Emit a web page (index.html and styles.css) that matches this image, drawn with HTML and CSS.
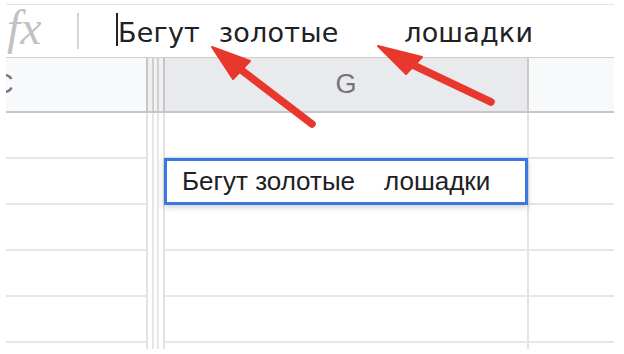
FILE: index.html
```html
<!DOCTYPE html>
<html lang="ru">
<head>
    <meta charset="UTF-8">
    <meta name="viewport" content="width=device-width, initial-scale=1.0">
    <title>Бегут золотые лошадки</title>
    <link rel="stylesheet" href="styles.css">
</head>
<body>
    <div class="sheet">
        <!-- Formula bar -->
        <div class="formula-bar">
            <span class="fx">fx</span>
            <span class="fx-sep"></span>
            <span class="caret"></span>
            <span class="formula-text">Бегут  золотые       лошадки</span>
        </div>

        <!-- Column headers -->
        <div class="row row-head">
            <div class="cell col-c"><span class="col-label col-label-cut">C</span></div>
            <div class="freeze"></div>
            <div class="cell col-g col-selected"><span class="col-label">G</span></div>
            <div class="cell col-h"></div>
        </div>

        <!-- Grid rows -->
        <div class="row">
            <div class="cell col-c"></div>
            <div class="freeze"></div>
            <div class="cell col-g"></div>
            <div class="cell col-h"></div>
        </div>
        <div class="row">
            <div class="cell col-c"></div>
            <div class="freeze"></div>
            <div class="cell col-g">
                <div class="cell-editor">Бегут золотые    лошадки</div>
            </div>
            <div class="cell col-h"></div>
        </div>
        <div class="row">
            <div class="cell col-c"></div>
            <div class="freeze"></div>
            <div class="cell col-g"></div>
            <div class="cell col-h"></div>
        </div>
        <div class="row">
            <div class="cell col-c"></div>
            <div class="freeze"></div>
            <div class="cell col-g"></div>
            <div class="cell col-h"></div>
        </div>
        <div class="row">
            <div class="cell col-c"></div>
            <div class="freeze"></div>
            <div class="cell col-g"></div>
            <div class="cell col-h"></div>
        </div>
        <div class="row row-stub">
            <div class="cell col-c"></div>
            <div class="freeze"></div>
            <div class="cell col-g"></div>
            <div class="cell col-h"></div>
        </div>
    </div>

    <!-- Annotation arrows -->
    <svg class="arrows" width="624" height="354" viewBox="0 0 624 354">
        <g fill="#e8382e" stroke="#e8382e" stroke-linecap="round" stroke-linejoin="round">
            <line x1="312" y1="124" x2="240" y2="69" stroke-width="7.5"/>
            <polygon points="212,47 233,79 250,61" stroke-width="2"/>
            <line x1="491" y1="102" x2="413" y2="65" stroke-width="7.5"/>
            <polygon points="378,46 406,74 422,57" stroke-width="2"/>
        </g>
    </svg>
</body>
</html>
```

FILE: styles.css
```css
* {
    box-sizing: border-box;
    margin: 0;
    padding: 0;
}

body {
    background-color: #fff;
    width: 624px;
    height: 354px;
    overflow: hidden;
    position: relative;
}

.sheet {
    margin-left: 6px;
    padding-top: 4px;
    width: 608px;
}

.formula-bar {
    display: flex;
    align-items: center;
    height: 53px;
    border-top: 1px solid #e4e4e4;
}

.fx {
    font-family: "Liberation Serif", serif;
    font-style: italic;
    font-size: 48px;
    line-height: 48px;
    color: #c2c2c2;
    width: 71px;
    padding-left: 1px;
    margin-top: -6px;
}

.fx-sep {
    width: 2px;
    height: 36px;
    background-color: #d4d4d4;
}

.caret {
    width: 2px;
    height: 33px;
    margin-left: 37px;
    margin-top: -3px;
    background-color: #222;
}

.formula-text {
    font-family: "DejaVu Sans", sans-serif;
    font-size: 27px;
    line-height: 30px;
    letter-spacing: 0.2px;
    word-spacing: 0.6px;
    color: #202124;
    white-space: pre;
    margin-top: 4px;
}

.row {
    display: flex;
    height: 46px;
}

.row-head {
    height: 56px;
    border-top: 1px solid #cdcdcd;
    border-bottom: 2px solid #c6c6c6;
}

.row-stub {
    height: 6px;
}

.cell {
    position: relative;
    height: 100%;
    border-bottom: 2px solid #e6e6e6;
}

.row-stub .cell,
.row-head .cell {
    border-bottom: none;
}

.col-c {
    width: 140px;
    overflow: hidden;
}

.col-g {
    width: 364px;
    border-right: 2px solid #e3e3e3;
}

.col-h {
    width: 85px;
}

.freeze {
    width: 19px;
    height: 100%;
    background: linear-gradient(to right,
        #e2e2e2 0, #e2e2e2 2px,
        #fff 2px, #fff 6px,
        #e6e6e6 6px, #e6e6e6 8px,
        #fff 8px, #fff 11px,
        #e6e6e6 11px, #e6e6e6 13px,
        #fff 13px, #fff 17px,
        #e2e2e2 17px, #e2e2e2 19px);
}

.row-head .freeze {
    background: linear-gradient(to right,
        #c6c6c6 0, #c6c6c6 2px,
        #eef0f1 2px, #eef0f1 6px,
        #cfcfcf 6px, #cfcfcf 8px,
        #eef0f1 8px, #eef0f1 11px,
        #cfcfcf 11px, #cfcfcf 13px,
        #eef0f1 13px, #eef0f1 17px,
        #c6c6c6 17px, #c6c6c6 19px);
}

.row-head .cell {
    display: flex;
    align-items: center;
    justify-content: center;
    background-color: #f8f9fa;
}

.row-head .col-c {
    justify-content: flex-start;
}

.row-head .col-g {
    border-right-color: #cacaca;
}

.row-head .col-selected {
    background-color: #e8eaed;
}

.col-label {
    font-family: "Liberation Sans", Arial, sans-serif;
    font-size: 27px;
    color: #737679;
}

.col-label-cut {
    margin-left: -12px;
}

.cell-editor {
    position: absolute;
    top: -1px;
    left: -1px;
    width: 364px;
    height: 47px;
    border: 3px solid #3b78e0;
    background-color: #fff;
    box-shadow: 0 2px 6px rgba(0, 0, 0, 0.2);
    display: flex;
    align-items: center;
    padding-left: 15px;
    padding-bottom: 1px;
    font-family: "Liberation Sans", Arial, sans-serif;
    font-size: 26px;
    color: #202124;
    white-space: pre;
    z-index: 2;
}

.arrows {
    position: absolute;
    top: 0;
    left: 0;
    pointer-events: none;
    z-index: 3;
}
```
